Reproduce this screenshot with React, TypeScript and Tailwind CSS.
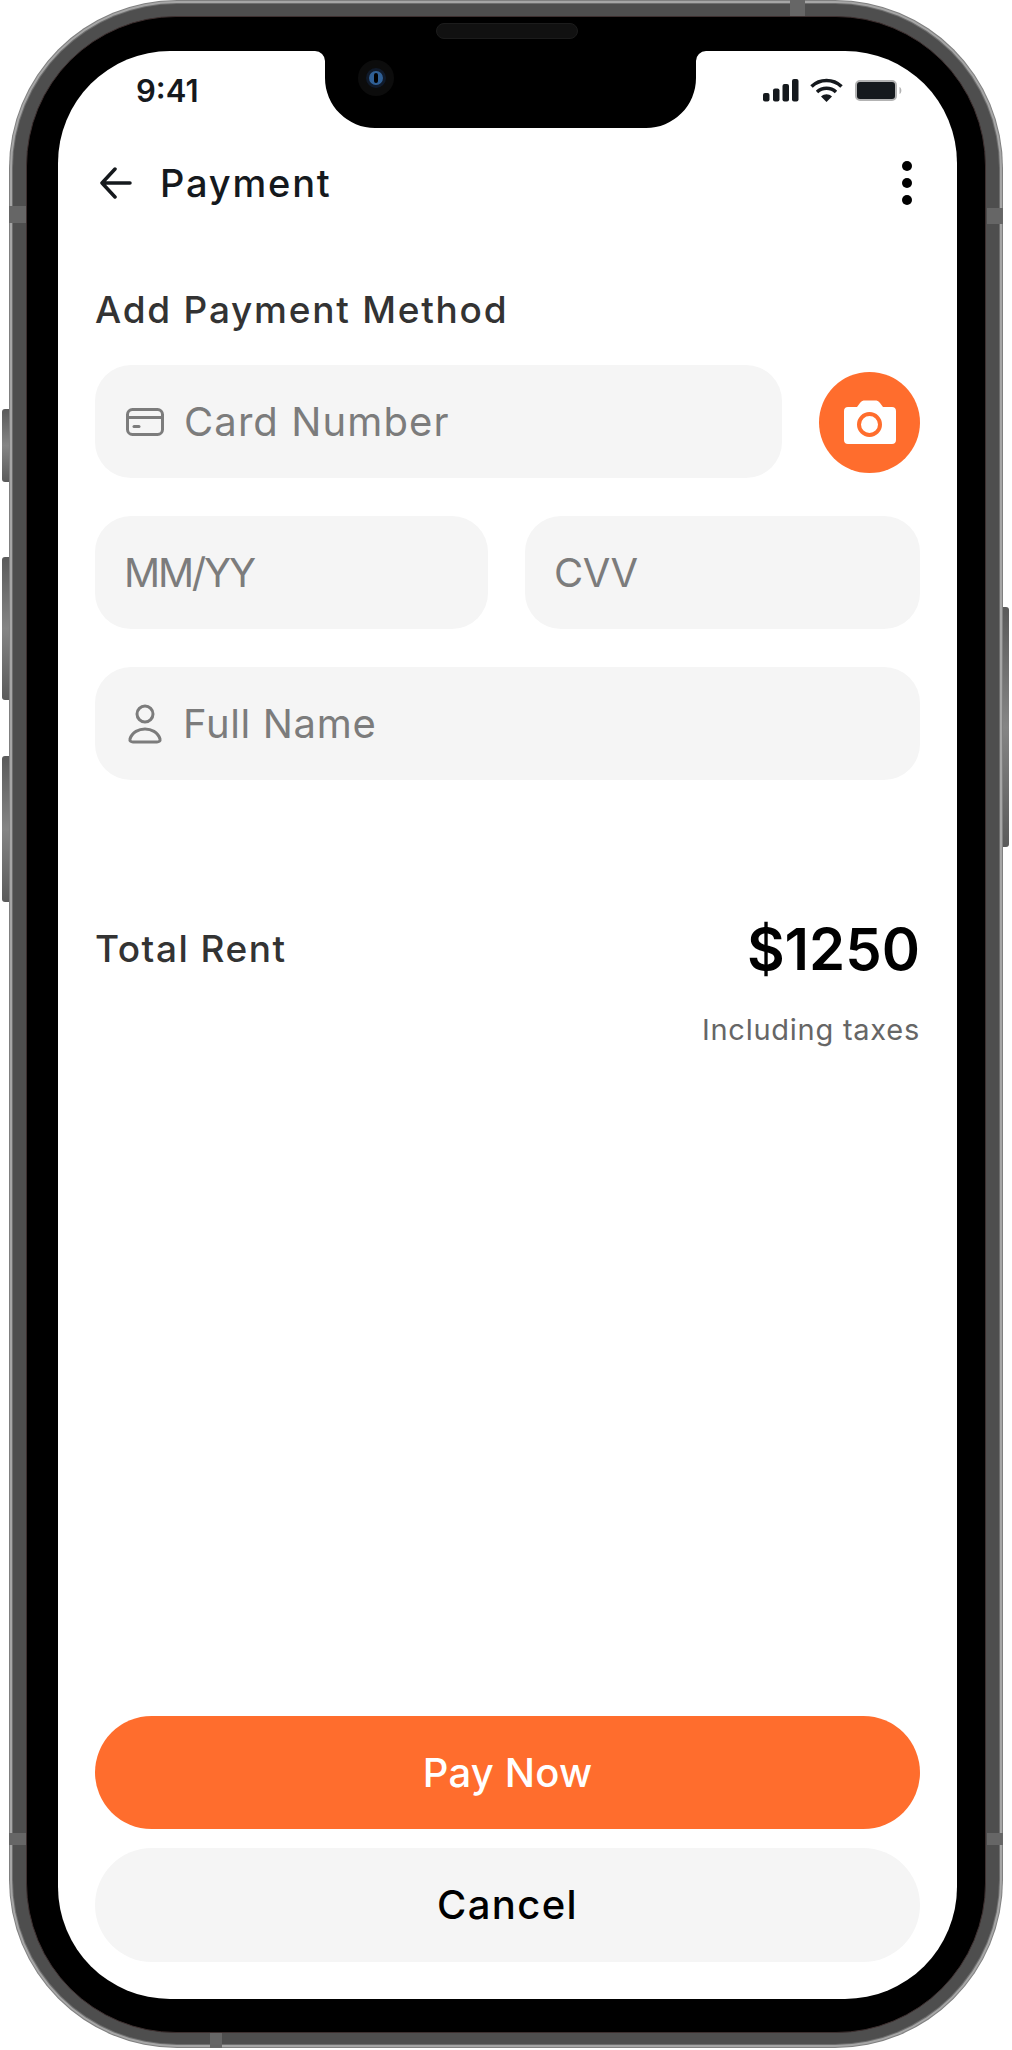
import React from 'react';

const font = { fontFamily: 'Inter, "Noto Sans", sans-serif' };

function Notch() {
  return (
    <div className="absolute left-[276px] top-0 w-[415px] h-[112px]">
      <svg width="415" height="112" viewBox="0 0 415 112">
        <path d="M12 33 H403 V34 A10 10 0 0 0 393 44 V61 A50 50 0 0 1 343 111 H72 A50 50 0 0 1 22 61 V44 A10 10 0 0 0 12 34 Z" fill="#000" />
      </svg>
    </div>
  );
}

function SignalIcons() {
  return (
    <div className="flex items-center">
      <svg width="36" height="23" viewBox="0 0 36 23" fill="#15191d">
        <rect x="0" y="14" width="6.5" height="8.5" rx="2" />
        <rect x="10" y="9.5" width="6.5" height="13" rx="2" />
        <rect x="19.5" y="5" width="6.5" height="17.5" rx="2" />
        <rect x="29" y="0" width="6.5" height="22.5" rx="2" />
      </svg>
      <svg className="ml-[11px]" width="33" height="24" viewBox="0 0 33 24" fill="none" stroke="#15191d" strokeWidth="3.6">
        <path d="M1.5 8.5 C 10 0.5 23 0.5 31.5 8.5" />
        <path d="M7 14 C 12.5 9 20.5 9 26 14" />
        <path d="M16.5 24 L 11 18.5 C 14.5 15.5 18.5 15.5 22 18.5 Z" fill="#15191d" stroke="none" />
      </svg>
      <svg className="ml-[12px]" width="49" height="21" viewBox="0 0 49 21">
        <rect x="1" y="1" width="40" height="19" rx="4" fill="#15191d" stroke="#b3b3b3" strokeWidth="2" />
        <path d="M44.5 7 C 47 8 47 13 44.5 14 Z" fill="#b3b3b3" />
      </svg>
    </div>
  );
}

function CardIcon() {
  return (
    <svg width="38" height="28" viewBox="0 0 38 28" fill="none" stroke="#7c7c7c" strokeWidth="3">
      <rect x="1.5" y="1.5" width="35" height="25" rx="5" />
      <path d="M1.5 9.5 H36.5" />
      <path d="M8 18.5 H13" strokeLinecap="round" />
    </svg>
  );
}

function PersonIcon() {
  return (
    <svg width="36" height="40" viewBox="0 0 36 40" fill="none" stroke="#7c7c7c" strokeWidth="3">
      <circle cx="18" cy="10" r="8" />
      <path d="M3 35 C 5 28 12 25 18 25 C 24 25 31 28 33 35 C 33.5 37 32 38 30 38 H6 C 4 38 2.5 37 3 35 Z" />
    </svg>
  );
}

function CameraIcon() {
  return (
    <svg width="52" height="44" viewBox="0 0 52 44">
      <path
        d="M4 7 H13 L16 3 C 17.5 1 19 0.5 21 0.5 H31 C 33 0.5 34.5 1 36 3 L39 7 H48 C 50.5 7 52 8.5 52 11 V40 C 52 42.5 50.5 44 48 44 H4 C 1.5 44 0 42.5 0 40 V11 C 0 8.5 1.5 7 4 7 Z"
        fill="#fff"
      />
      <circle cx="25.5" cy="24.5" r="10.5" fill="none" stroke="#ff6d2d" strokeWidth="4" />
    </svg>
  );
}

function Field({ icon, label, className, labelClass }: { icon?: React.ReactNode; label: string; className?: string; labelClass?: string }) {
  return (
    <div className={`h-[113px] rounded-[36px] bg-[#f5f5f5] flex items-center ${className ?? ''}`}>
      {icon}
      <span className={`text-[40px] leading-none text-[#7c7c7c] ${labelClass ?? ''}`}>{label}</span>
    </div>
  );
}

export default function App() {
  return (
    <div className="relative w-[1012px] h-[2050px] bg-white overflow-hidden pl-[9px]" style={font}>
      {/* side buttons */}
      <div className="absolute left-[2px] top-[409px] w-[8px] h-[73px] rounded-l-[3px] bg-linear-to-b from-[#5a5a5a] via-[#858585] to-[#5a5a5a]" />
      <div className="absolute left-[2px] top-[557px] w-[8px] h-[143px] rounded-l-[3px] bg-linear-to-b from-[#5a5a5a] via-[#858585] to-[#5a5a5a]" />
      <div className="absolute left-[2px] top-[756px] w-[8px] h-[146px] rounded-l-[3px] bg-linear-to-b from-[#5a5a5a] via-[#858585] to-[#5a5a5a]" />
      <div className="absolute left-[1001px] top-[607px] w-[8px] h-[240px] rounded-r-[3px] bg-linear-to-b from-[#5a5a5a] via-[#858585] to-[#5a5a5a]" />

      {/* phone frame: metal rim layers */}
      <div className="relative w-[994px] h-[2048px] rounded-[168px] bg-[#808080] p-[1px]">
        <div className="w-full h-full rounded-[167px] bg-[#a6a6a6] p-[2px]">
          <div className="w-full h-full rounded-[165px] bg-[#6e6e6e] p-[1px]">
            <div className="w-full h-full rounded-[164px] bg-[#4e4e4e] pt-[12px] pb-[11px] pl-[13px] pr-[13px]">
              <div className="relative w-full h-full rounded-[150px] bg-black border border-[#3d2f2f] pt-[34px] pb-[33px] pl-[31px] pr-[28px]">
                <div className="w-full h-full rounded-[112px] bg-white flex flex-col px-[37px] pb-[37px] overflow-hidden">
                  {/* status bar */}
                  <div className="flex items-center justify-between h-[78px] pl-[41px] pr-[16px]">
                    <span className="text-[31px] leading-none font-semibold text-[#15191d]">9:41</span>
                    <SignalIcons />
                  </div>

                  {/* header */}
                  <div className="flex items-center mt-[20px] h-[68px]">
                    <svg className="ml-[5px]" width="32" height="32" viewBox="0 0 32 32" fill="none" stroke="#15191d" strokeWidth="3.5" strokeLinecap="round" strokeLinejoin="round">
                      <path d="M2 16 H30 M15 2 L2 16 L15 30" />
                    </svg>
                    <span className="ml-[28px] text-[38px] leading-none font-medium tracking-[1.8px] text-[#15191d]">Payment</span>
                    <div className="ml-auto mr-[8px] flex flex-col gap-[7px]">
                      <div className="w-[10px] h-[10px] rounded-full bg-black" />
                      <div className="w-[10px] h-[10px] rounded-full bg-black" />
                      <div className="w-[10px] h-[10px] rounded-full bg-black" />
                    </div>
                  </div>

                  <h1 className="mt-[71px] text-[37px] leading-[44px] font-medium tracking-[1.75px] text-[#333333]">Add Payment Method</h1>

                  {/* form */}
                  <div className="mt-[33px] flex items-center justify-between">
                    <Field className="w-[687px] pl-[31px]" labelClass="tracking-[1.1px]" icon={<span className="mr-[20px] flex"><CardIcon /></span>} label="Card Number" />
                    <button className="mt-[1px] w-[101px] h-[101px] rounded-full bg-[#ff6d2d] flex items-center justify-center">
                      <CameraIcon />
                    </button>
                  </div>
                  <div className="mt-[38px] flex gap-[37px]">
                    <Field className="w-[393px] pl-[29px]" labelClass="tracking-[-2.2px]" label="MM/YY" />
                    <Field className="flex-1 pl-[29px]" labelClass="tracking-[-0.5px]" label="CVV" />
                  </div>
                  <Field className="mt-[38px] pl-[32px]" labelClass="tracking-[0.65px]" icon={<span className="mr-[20px] flex"><PersonIcon /></span>} label="Full Name" />

                  {/* total */}
                  <div className="mt-[131px] flex items-center justify-between">
                    <span className="text-[37px] font-medium tracking-[1.5px] text-[#333333]">Total Rent</span>
                    <span className="text-[58px] leading-[76px] font-semibold text-black">$1250</span>
                  </div>
                  <p className="mt-[25px] text-right text-[29px] leading-[36px] tracking-[0.75px] text-[#666666]">Including taxes</p>

                  {/* actions */}
                  <div className="mt-auto flex flex-col gap-[19px]">
                    <button className="h-[113px] rounded-full bg-[#ff6d2d] text-white text-[40px] font-medium tracking-[0.2px]">Pay Now</button>
                    <button className="h-[114px] rounded-full bg-[#f5f5f5] text-black text-[40px] font-medium tracking-[1.4px]">Cancel</button>
                  </div>
                </div>
                <Notch />
                {/* speaker and camera */}
                <div className="absolute left-[409px] top-[6px] w-[142px] h-[16px] rounded-full bg-[#111111] border border-[#1c1c1c]" />
                <div className="absolute left-[331px] top-[43px] w-[36px] h-[36px] rounded-full bg-[#0c0c0c] flex items-center justify-center">
                  <div className="w-[20px] h-[20px] rounded-full bg-[#2f5f95] border-[3px] border-[#101a2a] flex items-center justify-center">
                    <div className="w-[4px] h-[10px] rounded-full bg-black" />
                  </div>
                </div>
              </div>
            </div>
          </div>
        </div>
        {/* antenna bands */}
        <div className="absolute left-[781px] top-0 w-[15px] h-[16px] bg-[#666666]" />
        <div className="absolute left-0 top-[206px] w-[17px] h-[17px] bg-[#666666]" />
        <div className="absolute right-0 top-[208px] w-[16px] h-[16px] bg-[#666666]" />
        <div className="absolute left-0 top-[1833px] w-[17px] h-[12px] bg-[#666666]" />
        <div className="absolute right-0 top-[1833px] w-[16px] h-[12px] bg-[#666666]" />
        <div className="absolute left-[201px] bottom-0 w-[12px] h-[15px] bg-[#666666]" />
      </div>
    </div>
  );
}
